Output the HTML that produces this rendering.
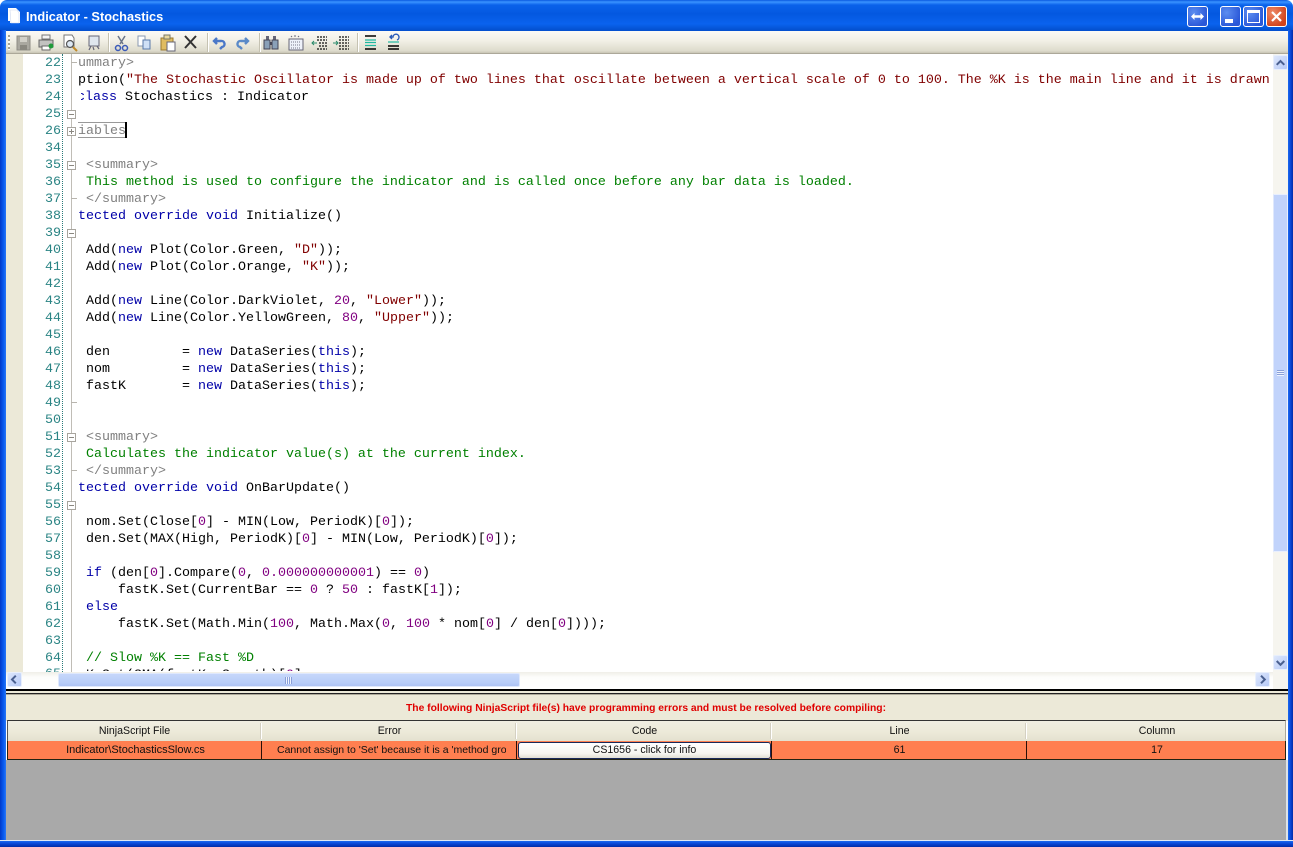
<!DOCTYPE html>
<html><head><meta charset="utf-8"><style>
html,body{margin:0;padding:0;width:1293px;height:847px;overflow:hidden;background:#fff}
*{box-sizing:border-box}
.a{position:absolute}
#title{left:0;top:0;width:1293px;height:32px;border-radius:7px 7px 0 0;background:linear-gradient(#0a5ae0 0,#3a93ff 2px,#0a62ea 5px,#0458e0 14px,#0a62ee 24px,#0450d0 30px)}
#tt{left:26px;top:9px;color:#fff;font:bold 12.8px/16px "Liberation Sans",sans-serif;white-space:pre}
.wb{top:6px;height:21px;border:1px solid #fff;border-radius:3px;background:radial-gradient(circle at 30% 30%,#5c8df0,#2a58d8 75%)}
#lb{left:0;top:30px;width:6px;height:817px;background:linear-gradient(90deg,#0038c8,#0a5cf0 60%,#2a78f5)}
#rb{left:1288px;top:30px;width:5px;height:817px;background:linear-gradient(90deg,#1a68f0,#0a48d8 50%,#002ca8)}
#bb{left:0;top:840px;width:1293px;height:7px;background:linear-gradient(#dfe8f4 0 1px,#1a68f0 1px,#0a48d8 50%,#002ca8)}
#tb{left:6px;top:31px;width:1282px;height:23px;background:linear-gradient(#fbfaf6,#f3f1e8 40%,#dedbcc 90%,#c8c5b5);border-bottom:1px solid #aca899}
.sep{top:33px;height:19px;background:#c5c2b2;border-right:1px solid #fff;width:2px}
#ed{left:6px;top:54px;width:1282px;height:618px;background:#fff;overflow:hidden}
#gut{left:0;top:0;width:17px;height:618px;background:#ece9d8}
#dot{left:56px;top:0;width:0;height:618px;border-left:1px dotted #2a7a7a}
#fl{left:65px;top:0;width:1px;height:618px;background:#c0bdb6}
.n,.l{position:absolute;font:13.33px/17px "Liberation Mono",monospace;white-space:pre;height:17px;margin-top:1px}
.n{left:10px;width:45px;text-align:right;color:#2a8484}
#code{left:72px;top:0;width:1195px;height:617px;overflow:hidden}
.l{left:0;color:#000}
.k{color:#0000a8}.s{color:#800000}.c{color:#008000}.g{color:#808080}.p{color:#800080}
.bx{position:absolute;left:61px;width:9px;height:9px;background:#fff;border:1px solid #a8a59e}
.bx:before{content:"";position:absolute;left:1px;top:3px;width:5px;height:1px;background:#8a8780}
.pl:after{content:"";position:absolute;left:3px;top:1px;width:1px;height:5px;background:#8a8780}
.ds{position:absolute;left:65px;width:6px;height:1px;background:#b8b5ae}
#vs{left:1267px;top:0;width:15px;height:618px;background:#f6f5ef}
#vth{left:0;top:140px;width:15px;height:358px;background:#c1d3fb;border:1px solid #e8effe;border-left-color:#dfe8fc}
.sb{position:absolute;width:15px;height:15px;background:linear-gradient(135deg,#dde7fc,#b6c9f6);border:1px solid #e8effc;border-radius:2px}
#hs{left:6px;top:672px;width:1267px;height:17px;background:linear-gradient(#f0efe8,#fdfdfb 30%,#fff)}
#hth{left:52px;top:1px;width:462px;height:14px;background:linear-gradient(#c6d7fa,#b8cdf8 70%,#adc3f4);border:1px solid #dfe8fc;border-radius:2px}
#hc{left:1273px;top:672px;width:15px;height:17px;background:#f6f5ef}
#sp{left:6px;top:689px;width:1282px;height:5px;background:#ece9d8;border-top:2px solid #000;border-bottom:1px solid #222}
#pn{left:6px;top:694px;width:1282px;height:27px;background:#ece9d8;border-top:1px solid #aca899}
#msg{left:-1px;top:6px;width:1282px;text-align:center;color:#e00000;font:bold 10.3px/16px "Liberation Sans",sans-serif}
#gh{left:7px;top:720px;width:1279px;height:21px;background:linear-gradient(#f0eee2,#ece9d8 60%,#e4e1cf);border-top:1px solid #333;border-left:1px solid #555;border-right:1px solid #aca899}
.h,.r{position:absolute;text-align:center;font:10.6px/18px "Liberation Sans",sans-serif;color:#111;white-space:nowrap;overflow:hidden}
.h{top:1px;height:18px}
.hs{position:absolute;top:2px;width:2px;height:16px;background:#d4d0c2;border-right:1px solid #fff}
#gr{left:7px;top:741px;width:1279px;height:19px;background:#ff7f50;border:1px solid #221;border-top:0}
.r{top:0;height:18px}
.rs{position:absolute;top:0;width:1px;height:18px;background:#2a1008}
#btn{position:absolute;left:510px;top:1px;width:253px;height:17px;border:1px solid #1a2a5a;border-radius:3px;background:linear-gradient(#fff,#f6f5f0 70%,#e2dfd2);text-align:center;font:10.6px/15px "Liberation Sans",sans-serif;color:#111}
#gy{left:6px;top:760px;width:1282px;height:80px;background:#a9a9a9;border-right:2px solid #dfe4e8}
svg{position:absolute;overflow:visible}
</style></head><body>
<div class="a" id="title"></div>
<svg style="left:7px;top:7px" width="14" height="18" viewBox="0 0 14 18"><path d="M1 1h8l4 4v11H3V14H1z" fill="#fff"/><path d="M3 3h7l2 3v10H4z" fill="#fff" stroke="#cfd8ee" stroke-width=".6"/></svg>
<div class="a" id="tt">Indicator - Stochastics</div>
<div class="a wb" style="left:1187px;width:21px"><svg style="left:2px;top:5px" width="15" height="9" viewBox="0 0 15 9"><path d="M1 4.500l3.500-3.500v2.200h6V1L14 4.500 10.500 8V5.800h-6V8z" fill="#fff"/></svg></div>
<div class="a wb" style="left:1220px;width:21px"><div class="a" style="left:4px;top:12px;width:8px;height:4px;background:#fff"></div></div>
<div class="a wb" style="left:1243px;width:21px"><div class="a" style="left:3px;top:3px;width:13px;height:13px;border:1px solid #fff;border-top:3px solid #fff"></div></div>
<div class="a wb" style="left:1266px;width:21px;background:radial-gradient(circle at 30% 30%,#ee8a68,#d2431c 75%)"><svg style="left:4px;top:4px" width="11" height="11" viewBox="0 0 11 11"><path d="M1 1l9 9M10 1l-9 9" stroke="#fff" stroke-width="2.200"/></svg></div>
<div class="a" id="lb"></div><div class="a" id="rb"></div><div class="a" id="bb"></div>
<div class="a" id="tb"></div>
<div class="a" style="left:8px;top:35px;width:2px;height:15px;background:repeating-linear-gradient(#a5a293 0 2px,#fbfaf6 2px 4px)"></div>
<svg style="left:0;top:0;z-index:1" width="1293" height="60">
<g fill="none">
<path d="M17 36h13v14H17z" fill="#aaa8a0" stroke="#8e8c85"/><path d="M20 37h7v5h-7z" fill="#d2d0c8"/><path d="M20 45h7v5h-7z" fill="#8a8880"/>
<path d="M42 35h8v4h-8z" fill="#f4f4f4" stroke="#777"/><path d="M39 40h14v7H39z" fill="#c2c2c0" stroke="#666"/><path d="M42 46h8v4h-8z" fill="#fff" stroke="#666"/><circle cx="51" cy="46" r="2.500" fill="#1f9a3a"/>
<path d="M64 35h8l2 3v9H64z" fill="#fff" stroke="#777"/><circle cx="70" cy="44" r="3.500" fill="#dde8f4" stroke="#555" stroke-width="1.200"/><path d="M73 47l4 4" stroke="#c08a2a" stroke-width="2"/>
<path d="M89 36h10v10H89z" fill="#dfe6ee" stroke="#667"/><path d="M91 46l-2 4M97 46l2 3M93 47l1 3" stroke="#667" stroke-width="1.200"/>
<path d="M118 36l5 8M125 36l-5 8" stroke="#6a7488" stroke-width="1.500"/><circle cx="118" cy="48" r="2.500" stroke="#3a5ab8" stroke-width="1.500"/><circle cx="125" cy="48" r="2.500" stroke="#3a5ab8" stroke-width="1.500"/>
<path d="M138 36h7v10h-7z" fill="#fff" stroke="#8a98b0"/><path d="M143 40h7v9h-7z" fill="#cfe0f6" stroke="#5a7aaa"/>
<path d="M161 38h12v12h-12z" fill="#e0bc60" stroke="#9a7a30"/><path d="M164 35h6v4h-6z" fill="#e8d8a0" stroke="#776"/><path d="M167 42h8v9h-8z" fill="#fff" stroke="#667"/>
<path d="M185 36l11 12M196 36l-11 12" stroke="#333" stroke-width="2"/>
<path d="M217 38l-3 3 3 3M215 41h6a3 3 0 0 1 1 6l-2 2" stroke="#4a78c8" stroke-width="2.400"/>
<path d="M245 38l3 3-3 3M247 41h-6a3 3 0 0 0-1 6l2 2" stroke="#5a8ac8" stroke-width="2.400"/>
<path d="M266 36h3v4h-3zM273 36h3v4h-3z" fill="#667"/><path d="M264 40h6v9h-6zM272 40h6v9h-6z" fill="#8aa0b8" stroke="#445"/><path d="M270 42h2v3h-2z" fill="#445"/>
<path d="M289 39h14v11h-14z" fill="#eef2fa" stroke="#667"/><path d="M291 36l1 1M295 35v2M299 36l-1 1" stroke="#667"/><path d="M291 42h10M291 45h10M291 48h10" stroke="#778" stroke-dasharray="1 1"/>
<path d="M317 37h10M317 40h10M319 43h8M319 46h8M317 49h10" stroke="#111" stroke-width="1.200" stroke-dasharray="2 1"/><path d="M317 43h-5M314 41l-2 2 2 2" stroke="#2a8a6a"/>
<path d="M339 37h10M339 40h10M339 43h10M339 46h10M339 49h10" stroke="#111" stroke-width="1.200" stroke-dasharray="2 1"/><path d="M333 43h5M336 41l2 2-2 2" stroke="#2a8a6a"/>
<path d="M365 36h11M365 49h11" stroke="#000" stroke-width="1.400"/><path d="M365 40h11M365 42.500h11M365 45.500h11" stroke="#20b8a0" stroke-width="1.200"/>
<path d="M388 49h11M388 46h11" stroke="#000" stroke-width="1.400"/><path d="M388 42h11" stroke="#20b8a0" stroke-width="1.200"/><path d="M397 40a3 3 0 1 0-4-3h-3M392 35l-2 2 2 2" stroke="#2a5ab8" stroke-width="1.400"/>
</g></svg>
<div class="a sep" style="left:108px"></div><div class="a sep" style="left:207px"></div><div class="a sep" style="left:259px"></div><div class="a sep" style="left:357px"></div>
<div class="a" id="ed">
<div class="a" id="gut"></div><div class="a" id="dot"></div><div class="a" id="fl"></div>
<div class="n" style="top:0">22</div><div class="n" style="top:17px">23</div><div class="n" style="top:34px">24</div><div class="n" style="top:51px">25</div><div class="n" style="top:68px">26</div><div class="n" style="top:85px">34</div><div class="n" style="top:102px">35</div><div class="n" style="top:119px">36</div><div class="n" style="top:136px">37</div><div class="n" style="top:153px">38</div><div class="n" style="top:170px">39</div><div class="n" style="top:187px">40</div><div class="n" style="top:204px">41</div><div class="n" style="top:221px">42</div><div class="n" style="top:238px">43</div><div class="n" style="top:255px">44</div><div class="n" style="top:272px">45</div><div class="n" style="top:289px">46</div><div class="n" style="top:306px">47</div><div class="n" style="top:323px">48</div><div class="n" style="top:340px">49</div><div class="n" style="top:357px">50</div><div class="n" style="top:374px">51</div><div class="n" style="top:391px">52</div><div class="n" style="top:408px">53</div><div class="n" style="top:425px">54</div><div class="n" style="top:442px">55</div><div class="n" style="top:459px">56</div><div class="n" style="top:476px">57</div><div class="n" style="top:493px">58</div><div class="n" style="top:510px">59</div><div class="n" style="top:527px">60</div><div class="n" style="top:544px">61</div><div class="n" style="top:561px">62</div><div class="n" style="top:578px">63</div><div class="n" style="top:595px">64</div><div class="n" style="top:611px">65</div>
<div class="ds" style="top:8px"></div><div class="ds" style="top:144px"></div><div class="ds" style="top:348px"></div><div class="ds" style="top:416px"></div>
<div class="bx" style="top:56px"></div><div class="bx pl" style="top:73px"></div><div class="bx" style="top:107px"></div><div class="bx" style="top:175px"></div><div class="bx" style="top:379px"></div><div class="bx" style="top:447px"></div>
<div class="a" id="code">
<div class="l g" style="top:0">ummary&gt;</div>
<div class="l" style="top:17px">ption(<span class="s">"The Stochastic Oscillator is made up of two lines that oscillate between a vertical scale of 0 to 100. The %K is the main line and it is drawn as a solid line.</span></div>
<div class="l" style="top:34px;left:-1px"><span class="k"><span style="display:inline-block;clip-path:inset(0 0 0 4px)">c</span>lass</span> Stochastics : Indicator</div>
<div class="l g" style="top:68px">iables</div>
<div class="a" style="left:0;top:68px;width:48px;height:16px;border:1px solid #999;border-left:0"></div>
<div class="a" style="left:47px;top:68px;width:2px;height:16px;background:#000"></div>
<div class="l g" style="top:102px"> &lt;summary&gt;</div>
<div class="l c" style="top:119px"> This method is used to configure the indicator and is called once before any bar data is loaded.</div>
<div class="l g" style="top:136px"> &lt;/summary&gt;</div>
<div class="l" style="top:153px"><span class="k">tected override void</span> Initialize()</div>
<div class="l" style="top:187px"> Add(<span class="k">new</span> Plot(Color.Green, <span class="s">"D"</span>));</div>
<div class="l" style="top:204px"> Add(<span class="k">new</span> Plot(Color.Orange, <span class="s">"K"</span>));</div>
<div class="l" style="top:238px"> Add(<span class="k">new</span> Line(Color.DarkViolet, <span class="p">20</span>, <span class="s">"Lower"</span>));</div>
<div class="l" style="top:255px"> Add(<span class="k">new</span> Line(Color.YellowGreen, <span class="p">80</span>, <span class="s">"Upper"</span>));</div>
<div class="l" style="top:289px"> den         = <span class="k">new</span> DataSeries(<span class="k">this</span>);</div>
<div class="l" style="top:306px"> nom         = <span class="k">new</span> DataSeries(<span class="k">this</span>);</div>
<div class="l" style="top:323px"> fastK       = <span class="k">new</span> DataSeries(<span class="k">this</span>);</div>
<div class="l g" style="top:374px"> &lt;summary&gt;</div>
<div class="l c" style="top:391px"> Calculates the indicator value(s) at the current index.</div>
<div class="l g" style="top:408px"> &lt;/summary&gt;</div>
<div class="l" style="top:425px"><span class="k">tected override void</span> OnBarUpdate()</div>
<div class="l" style="top:459px"> nom.Set(Close[<span class="p">0</span>] - MIN(Low, PeriodK)[<span class="p">0</span>]);</div>
<div class="l" style="top:476px"> den.Set(MAX(High, PeriodK)[<span class="p">0</span>] - MIN(Low, PeriodK)[<span class="p">0</span>]);</div>
<div class="l" style="top:510px"> <span class="k">if</span> (den[<span class="p">0</span>].Compare(<span class="p">0</span>, <span class="p">0.000000000001</span>) == <span class="p">0</span>)</div>
<div class="l" style="top:527px">     fastK.Set(CurrentBar == <span class="p">0</span> ? <span class="p">50</span> : fastK[<span class="p">1</span>]);</div>
<div class="l" style="top:544px"> <span class="k">else</span></div>
<div class="l" style="top:561px">     fastK.Set(Math.Min(<span class="p">100</span>, Math.Max(<span class="p">0</span>, <span class="p">100</span> * nom[<span class="p">0</span>] / den[<span class="p">0</span>])));</div>
<div class="l c" style="top:595px"> // Slow %K == Fast %D</div>
<div class="l" style="top:612px"> K.Set(SMA(fastK, Smooth)[<span class="p">0</span>]</div>
</div>
<div class="a" id="vs"><div class="a" id="vth"></div>
<div class="sb" style="left:0;top:1px"><svg style="left:2px;top:4px" width="9" height="6" viewBox="0 0 9 6"><path d="M.7 4.800L4.500 1l3.800 3.800" fill="none" stroke="#4a6090" stroke-width="2"/></svg></div>
<div class="a" style="left:4px;top:316px;width:7px;height:6px;background:repeating-linear-gradient(#8aa0d8 0 1px,#eef3ff 1px 2px)"></div>
<div class="sb" style="left:0;top:601px"><svg style="left:2px;top:4px" width="9" height="6" viewBox="0 0 9 6"><path d="M.7 1L4.500 4.800 8.300 1" fill="none" stroke="#4a6090" stroke-width="2"/></svg></div></div>
</div>
<div class="a" id="hs"><div class="a" id="hth"><div class="a" style="left:226px;top:3px;width:7px;height:7px;background:repeating-linear-gradient(90deg,#8aa0d8 0 1px,#eef3ff 1px 2px)"></div></div>
<div class="sb" style="left:1px;top:0"><svg style="left:3px;top:2px" width="6" height="9" viewBox="0 0 6 9"><path d="M4.800.7L1 4.500l3.800 3.800" fill="none" stroke="#4a6090" stroke-width="2"/></svg></div>
<div class="sb" style="left:1249px;top:0"><svg style="left:4px;top:2px" width="6" height="9" viewBox="0 0 6 9"><path d="M1 .7L4.800 4.500 1 8.300" fill="none" stroke="#4a6090" stroke-width="2"/></svg></div></div>
<div class="a" id="hc"></div>
<div class="a" id="sp"></div>
<div class="a" id="pn"><div class="a" id="msg">The following NinjaScript file(s) have programming errors and must be resolved before compiling:</div></div>
<div class="a" id="gh">
<div class="h" style="left:0;width:253px">NinjaScript File</div><div class="h" style="left:255px;width:253px">Error</div><div class="h" style="left:510px;width:253px">Code</div><div class="h" style="left:765px;width:253px">Line</div><div class="h" style="left:1020px;width:258px">Column</div>
<div class="hs" style="left:252px"></div><div class="hs" style="left:507px"></div><div class="hs" style="left:762px"></div><div class="hs" style="left:1017px"></div>
</div>
<div class="a" id="gr">
<div class="r" style="left:0;width:255px;font-size:11px">Indicator\StochasticsSlow.cs</div>
<div class="r" style="left:254px;width:244px;padding-left:15px;text-align:left;font-size:10.5px">Cannot assign to 'Set' because it is a 'method group'</div>
<div id="btn">CS1656 - click for info</div>
<div class="r" style="left:765px;width:253px">61</div><div class="r" style="left:1020px;width:258px">17</div>
<div class="rs" style="left:253px"></div><div class="rs" style="left:508px"></div><div class="rs" style="left:763px"></div><div class="rs" style="left:1018px"></div>
</div>
<div class="a" id="gy"></div>
</body></html>
